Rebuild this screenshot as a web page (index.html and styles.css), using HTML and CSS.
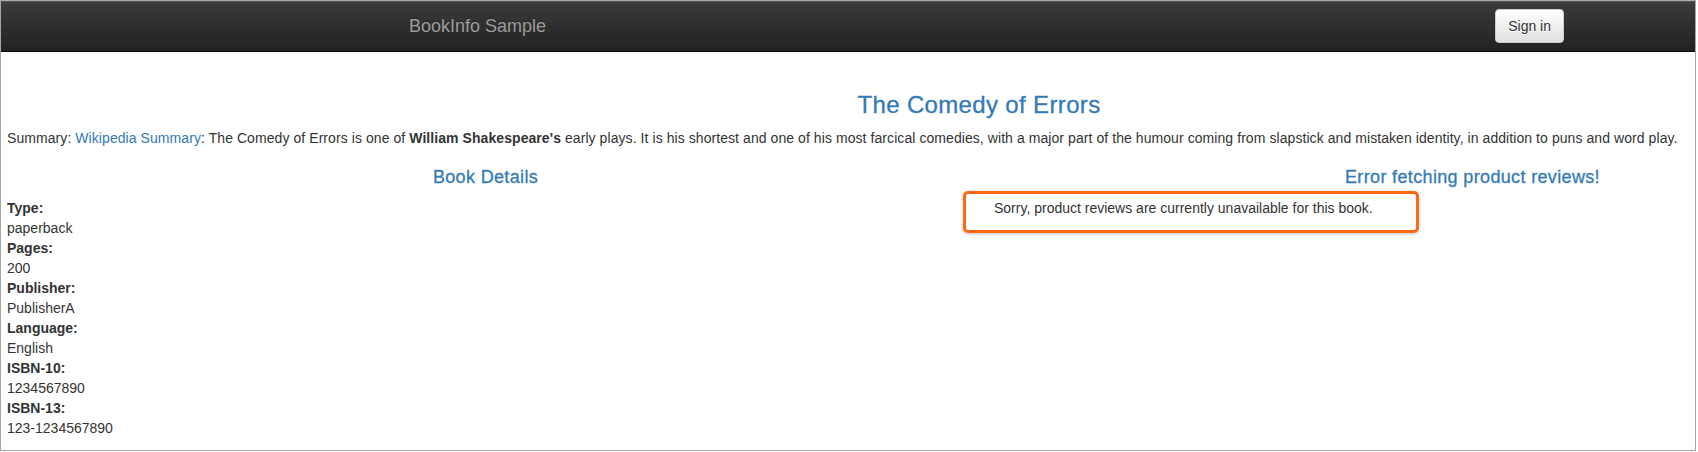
FILE: index.html
```html
<!DOCTYPE html>
<html lang="en">
<head>
<meta charset="utf-8">
<title>Simple Bookstore App</title>
<link rel="stylesheet" href="styles.css">
</head>
<body>
<div class="frame">
  <div class="page">
    <nav class="navbar">
      <div class="nav-inner">
        <a class="brand" href="#">BookInfo Sample</a>
        <button class="btn" type="button">Sign in</button>
      </div>
    </nav>
    <main class="content">
      <h3 class="title">The Comedy of Errors</h3>
      <p class="summary">Summary: <a href="#">Wikipedia Summary</a>: The Comedy of Errors is one of <b>William Shakespeare's</b> early plays. It is his shortest and one of his most farcical comedies, with a major part of the humour coming from slapstick and mistaken identity, in addition to puns and word play.</p>
      <div class="row">
        <section class="col">
          <h4 class="subtitle">Book Details</h4>
          <dl class="details">
            <dt>Type:</dt><dd>paperback</dd>
            <dt>Pages:</dt><dd>200</dd>
            <dt>Publisher:</dt><dd>PublisherA</dd>
            <dt>Language:</dt><dd>English</dd>
            <dt>ISBN-10:</dt><dd>1234567890</dd>
            <dt>ISBN-13:</dt><dd>123-1234567890</dd>
          </dl>
        </section>
        <section class="col">
          <h4 class="subtitle">Error fetching product reviews!</h4>
          <p class="notice">Sorry, product reviews are currently unavailable for this book.<span class="highlight"></span></p>
        </section>
      </div>
    </main>
  </div>
</div>
</body>
</html>
```

FILE: styles.css
```css
* {
  box-sizing: border-box;
}

html, body {
  margin: 0;
  padding: 0;
  background: #ffffff;
}

body {
  font-family: "Liberation Sans", Arial, sans-serif;
  font-size: 14px;
  line-height: 20px;
  color: #333333;
}

.frame {
  width: 1696px;
  height: 451px;
  border: 1px solid #a6a6a6;
  overflow: hidden;
  background: #ffffff;
}

.page {
  width: 1974px;
  margin-left: -9px;
}

.navbar {
  height: 51px;
  background-image: linear-gradient(to bottom, #3c3c3c 0, #222222 100%);
  border-bottom: 1px solid #080808;
  box-shadow: inset 0 1px 0 rgba(255, 255, 255, .15);
  margin-bottom: 20px;
}

.nav-inner {
  width: 1170px;
  margin: 0 auto;
  padding: 0 15px;
  display: flex;
  justify-content: space-between;
  align-items: flex-start;
}

.brand {
  display: block;
  height: 50px;
  padding: 15px;
  margin-left: -15px;
  font-size: 18px;
  line-height: 20px;
  color: #9d9d9d;
  text-decoration: none;
  text-shadow: 0 -1px 0 rgba(0, 0, 0, .25);
}

.btn {
  margin-top: 8px;
  margin-right: -15px;
  height: 34px;
  padding: 6px 12px;
  font-family: "Liberation Sans", Arial, sans-serif;
  font-size: 14px;
  line-height: 20px;
  color: #333333;
  background-image: linear-gradient(to bottom, #ffffff 0, #e0e0e0 100%);
  border: 1px solid #cccccc;
  border-radius: 4px;
  text-shadow: 0 1px 0 #ffffff;
  box-shadow: inset 0 1px 0 rgba(255, 255, 255, .15), 0 1px 1px rgba(0, 0, 0, .075);
}

.content {
  display: flow-root;
  padding: 0 15px;
}

.title {
  margin: 20px 0 10px;
  font-size: 24px;
  line-height: 26.4px;
  font-weight: 400;
  letter-spacing: 0.35px;
  -webkit-text-stroke: 0.3px #337ab7;
  text-align: center;
  color: #337ab7;
}

.summary {
  margin: 0 0 10px;
  letter-spacing: 0.07px;
}

.summary a {
  color: #337ab7;
  text-decoration: none;
}

.summary b {
  font-weight: 700;
}

.row {
  margin: 0 -15px;
  display: grid;
  grid-template-columns: 1fr 1fr;
}

.col {
  padding: 0 15px;
}

.subtitle {
  margin: 10px 0 10px;
  font-size: 18px;
  line-height: 19.8px;
  font-weight: 400;
  letter-spacing: 0.35px;
  -webkit-text-stroke: 0.3px #337ab7;
  text-align: center;
  color: #337ab7;
}

.details {
  margin: 0 0 20px;
}

.details dt {
  font-weight: 700;
}

.details dd {
  margin: 0;
}

.notice {
  position: relative;
  margin: 0 0 10px;
}

.highlight {
  position: absolute;
  left: -31px;
  top: -7px;
  width: 456px;
  height: 42px;
  border: 3px solid #ff6a10;
  border-radius: 5px;
  box-shadow: 0 1px 3px rgba(0, 0, 0, .25);
}
```
